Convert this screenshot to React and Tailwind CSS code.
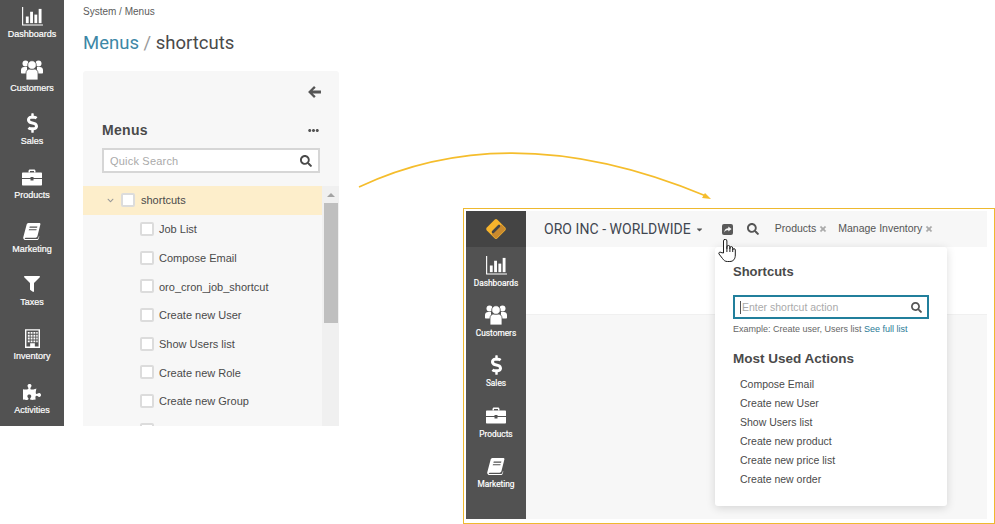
import React from "react";
import {
  FaDollarSign,
  FaFilter,
  FaPuzzlePiece,
  FaSearch,
  FaTimes,
  FaEllipsisH,
  FaChevronDown,
  FaCaretDown,
} from "react-icons/fa";

const ChartIcon = ({ className }) => (
  <svg viewBox="0 0 22 20" className={className} fill="currentColor">
    <path d="M0 0h1.200v18.300H22v1.200H0z" />
    <rect x="4" y="10" width="3" height="7" />
    <rect x="8.500" y="5" width="3" height="12" />
    <rect x="13" y="8" width="3" height="9" />
    <rect x="17.500" y="2" width="3" height="15" />
  </svg>
);

const UsersIcon = ({ className }) => (
  <svg viewBox="0 0 22 20" className={className} fill="currentColor">
    <circle cx="4.500" cy="3.500" r="3" />
    <circle cx="17.500" cy="3.500" r="3" />
    <path d="M0 12.500V10c0-2 1.500-3 3-3h3v6.500H1c-.6 0-1-.4-1-1zM22 12.500V10c0-2-1.500-3-3-3h-3v6.500h5c.6 0 1-.4 1-1z" />
    <path d="M5 20v-7c0-2.500 1.800-4 4-4h4c2.200 0 4 1.500 4 4v7z" stroke="#525252" strokeWidth="0.800" />
    <circle cx="11" cy="5" r="4.300" stroke="#525252" strokeWidth="0.800" />
  </svg>
);

const BriefcaseIcon = ({ className }) => (
  <svg viewBox="0 0 20 16" className={className} fill="currentColor">
    <path fillRule="evenodd" d="M6.500 3V1.500C6.500.7 7.200 0 8 0h4c.8 0 1.500.7 1.500 1.500V3H12V1.500H8V3z" />
    <path d="M1 3h18c.6 0 1 .4 1 1v4.500H11.500V7.500h-3v1H0V4c0-.6.4-1 1-1z" />
    <path d="M0 9.500h8.500v1.500h3V9.500H20V15c0 .6-.4 1-1 1H1c-.6 0-1-.4-1-1z" />
  </svg>
);

const BookIcon = ({ className }) => (
  <svg viewBox="0 0 20 20" className={className} fill="currentColor">
    <path d="M6 1h12c1 0 1.600.8 1.300 1.800l-3.300 13c-.3 1-1 1.600-2 1.600H3c-.8 0-1.200.4-1 1 .2.5.6.6 1.200.6h12c.8 0 1.500-.5 1.800-1.300l.6-2 .6.3-.8 2.600c-.3 1-1.200 1.600-2.200 1.600H3C1.200 20.200 0 18.800.3 17L4 3c.3-1.200 1-2 2-2z" />
    <path fill="#525252" d="M7.500 5h8.500l-.4 1.300H7.100zM6.700 8h8.500l-.4 1.300H6.300z" />
  </svg>
);

const BuildingIcon = ({ className }) => (
  <svg viewBox="0 0 16 20" className={className} fill="currentColor">
    <path fillRule="evenodd" d="M0 0h16v20H0zM1.500 1.500v17h4V15h5v3.500h4v-17z" />
    <path d="M3 3h2v2H3zM6 3h2v2H6zM9 3h2v2H9zM12 3h1.500v2H12zM3 6h2v2H3zM6 6h2v2H6zM9 6h2v2H9zM12 6h1.500v2H12zM3 9h2v2H3zM6 9h2v2H6zM9 9h2v2H9zM12 9h1.500v2H12zM3 12h2v2H3zM6 12h2v2H6zM9 12h2v2H9zM12 12h1.500v2H12z" />
  </svg>
);

const ArrowLeftIcon = ({ className }) => (
  <svg viewBox="0 0 14 13" className={className} fill="currentColor">
    <path d="M6.500 0 8.300 1.800 5 5h9v3H5l3.300 3.200L6.500 13 0 6.500z" />
  </svg>
);

const ShareIcon = ({ className }) => (
  <svg viewBox="0 0 11 11" className={className}>
    <rect width="11" height="11" rx="2" fill="#5a5a5a" />
    <path d="M2.200 8.500c0-2.800 1.800-4.300 4.100-4.300V2.400L9.600 5 6.300 7.600V6c-1.800 0-3 .7-4.100 2.500z" fill="#f7f7f7" />
  </svg>
);

const HandCursor = ({ className }) => (
  <svg viewBox="0 0 18 23" className={className} fill="#fff" stroke="#1f1f1f" strokeWidth="1" strokeLinejoin="round">
    <path d="M5.500 14V2a1.700 1.700 0 0 1 3.400 0v7.500V8a1.500 1.500 0 0 1 3 0v2V9a1.400 1.400 0 0 1 2.800 0v2a1.300 1.300 0 0 1 2.600 0v5c0 4-2 6.500-5.500 6.500H9.500c-2.500 0-3.500-1-5-3L1 15c-.8-1.200.9-2.600 2-1.500z" />
    <path d="M8.900 9v4M11.900 10v3M14.700 11v2" fill="none" />
  </svg>
);

const Logo = () => (
  <svg viewBox="0 0 22 22" className="w-[22px] h-[22px]">
    <rect x="3.500" y="3.500" width="15" height="15" rx="2" fill="#f7b42c" transform="rotate(45 11 11)" />
    <path d="M19.400 9.600a2 2 0 0 1 0 2.800l-7 7a2 2 0 0 1-2.800 0L6.500 16.300l9.800-9.800z" fill="#c98a2e" />
    <path d="M8 14 14 8" stroke="#444444" strokeWidth="2.600" strokeLinecap="round" />
  </svg>
);

const leftNav = [
  { label: "Dashboards", icon: <ChartIcon className="w-[21px] h-[19px]" /> },
  { label: "Customers", icon: <UsersIcon className="w-[22px] h-[20px]" /> },
  { label: "Sales", icon: <FaDollarSign className="w-[11px] h-[20px]" /> },
  { label: "Products", icon: <BriefcaseIcon className="w-[20px] h-[17px]" /> },
  { label: "Marketing", icon: <BookIcon className="w-[18px] h-[18px]" /> },
  { label: "Taxes", icon: <FaFilter className="w-[16px] h-[18px]" /> },
  { label: "Inventory", icon: <BuildingIcon className="w-[15px] h-[19px]" /> },
  { label: "Activities", icon: <FaPuzzlePiece className="w-[18px] h-[18px]" /> },
];

const rightNav = leftNav.slice(0, 5);

const treeItems = [
  "Job List",
  "Compose Email",
  "oro_cron_job_shortcut",
  "Create new User",
  "Show Users list",
  "Create new Role",
  "Create new Group",
  "",
];

const usedActions = [
  "Compose Email",
  "Create new User",
  "Show Users list",
  "Create new product",
  "Create new price list",
  "Create new order",
];

const Checkbox = () => (
  <span className="block w-[14px] h-[14px] shrink-0 bg-white border-2 border-[#dcdcdc] rounded-[2px]" />
);

const App = () => {
  return (
    <div className="relative w-[995px] h-[524px] bg-white overflow-hidden font-['Liberation_Sans',Arial,sans-serif] text-[#4a4a4a]">
      {/* first shot: menu tree */}
      <div className="absolute left-0 top-0 w-[339px] h-[426px] flex">
        <nav className="w-[64px] h-full bg-[#525252] text-white overflow-hidden flex flex-col items-center pt-[6px]">
          {leftNav.map((item) => (
            <div key={item.label} className="h-[53.7px] shrink-0 w-full flex flex-col items-center">
              <div className="h-[20px] flex items-center justify-center">{item.icon}</div>
              <span className="mt-[1px] text-[9px] leading-[14px] [-webkit-text-stroke:0.2px_white]">
                {item.label}
              </span>
            </div>
          ))}
        </nav>

        <div className="flex-1 min-w-0 pl-[19px] flex flex-col">
          <div className="pt-[6px] text-[10px] leading-[12px] text-[#5c5c5c]">System / Menus</div>
          <h1 className="mt-[12px] text-[18.5px] leading-[26px] font-['Roboto',sans-serif] font-normal">
            <span className="text-[#3d87a6]">Menus</span>
            <span className="text-[#9a9a9a]"> / </span>
            <span className="text-[#4a4a4a]">shortcuts</span>
          </h1>

          <section className="mt-[15px] flex-1 min-h-0 bg-[#f7f7f7] rounded-t-[3px] overflow-hidden flex flex-col">
            <div className="flex justify-end pt-[15px] pr-[18px] h-[45px] shrink-0">
              <ArrowLeftIcon className="w-[13px] h-[12px] text-[#555]" />
            </div>
            <div className="pl-[19px] pr-[19px] shrink-0">
              <div className="flex items-center justify-between h-[28px]">
                <span className="text-[14px] font-bold tracking-[0.3px] text-[#4a4a4a]">Menus</span>
                <FaEllipsisH className="w-[11px] h-[11px] text-[#555] mr-[1px]" />
              </div>
              <div className="mt-[4px] h-[25px] bg-white border-2 border-[#d6d6d6] flex items-center justify-between pl-[6px] pr-[6px]">
                <span className="pt-[1px] text-[11px] tracking-[0.2px] text-[#aaaaaa]">Quick Search</span>
                <FaSearch className="w-[12px] h-[12px] text-[#4a4a4a]" />
              </div>
            </div>

            <div className="mt-[13px] flex-1 min-h-0 flex overflow-hidden">
              <ul className="flex-1 min-w-0 text-[11px] text-[#4a4a4a]">
                <li className="h-[28.7px] bg-[#fdeecb] flex items-center pl-[24px] gap-[7px]">
                  <FaChevronDown className="w-[7px] h-[7px] text-[#999]" />
                  <Checkbox />
                  <span className="ml-[-1px]">shortcuts</span>
                </li>
                {treeItems.map((name, i) => (
                  <li key={i} className="h-[28.7px] flex items-center pl-[57px] gap-[5px]">
                    <Checkbox />
                    <span className="pt-[1px]">{name}</span>
                  </li>
                ))}
              </ul>
              <div className="w-[17px] shrink-0 bg-[#f0f0f0] flex flex-col items-center">
                <div className="h-[17px] flex items-center justify-center">
                  <span className="block w-0 h-0 border-x-[4px] border-x-transparent border-b-[4px] border-b-[#a3a3a3]" />
                </div>
                <div className="w-[14px] h-[120px] bg-[#bfbfbf]" />
              </div>
            </div>
          </section>
        </div>
      </div>

      {/* arrow between the shots */}
      <svg className="absolute left-0 top-0 w-[995px] h-[524px] pointer-events-none" viewBox="0 0 995 524" fill="none">
        <path d="M359 187 Q512 115 706 196" stroke="#f5bd2c" strokeWidth="1.600" />
        <path d="M711 199 L702 198 L705 193 Z" fill="#f5bd2c" />
      </svg>

      {/* second shot: shortcuts popup */}
      <div className="absolute left-[463px] top-[208px] w-[532px] h-[316px] border border-[#eeb92f] pl-[2px] pr-[7px] pt-[2px] pb-[4px]">
        <div className="relative w-full h-full flex">
          <nav className="w-[60px] shrink-0 bg-[#525252] text-white flex flex-col">
            <div className="h-[36px] shrink-0 bg-[#444444] flex items-center justify-center">
              <Logo />
            </div>
            <div className="pt-[8px] flex flex-col">
              {rightNav.map((item) => (
                <div key={item.label} className="h-[50.2px] shrink-0 flex flex-col items-center">
                  <div className="h-[20px] flex items-center justify-center">{item.icon}</div>
                  <span className="mt-[2px] text-[8.3px] leading-[13px] font-['Roboto',sans-serif] [-webkit-text-stroke:0.2px_white]">
                    {item.label}
                  </span>
                </div>
              ))}
            </div>
          </nav>

          <div className="flex-1 min-w-0 flex flex-col">
            <header className="h-[36px] shrink-0 bg-[#f7f7f7] flex items-center pl-[18px]">
              <span className="font-['Roboto',sans-serif] text-[14px] tracking-[0.05px] text-[#3f4650]">ORO INC - WORLDWIDE</span>
              <FaCaretDown className="ml-[4px] w-[9px] h-[9px] text-[#555]" />
              <ShareIcon className="ml-[18px] w-[11px] h-[11px]" />
              <FaSearch className="ml-[14px] w-[12px] h-[12px] text-[#555]" />
              <span className="ml-[16px] text-[10.5px] text-[#555]">Products</span>
              <FaTimes className="ml-[3px] w-[8px] h-[8px] text-[#aaaaaa] stroke-[30]" />
              <span className="ml-[11px] text-[10.5px] text-[#555]">Manage Inventory</span>
              <FaTimes className="ml-[3px] w-[8px] h-[8px] text-[#aaaaaa] stroke-[30]" />
            </header>
            <div className="h-[68px] shrink-0 bg-white border-b border-[#f0f0f0]" />
            <div className="flex-1 bg-[#f7f7f7]" />
          </div>

          {/* popup */}
          <div className="absolute left-[249px] top-[36px] w-[232px] h-[259px] bg-white rounded-[3px] shadow-[0_2px_10px_rgba(0,0,0,0.14)] pl-[18px] pr-[18px] pt-[17px]">
            <h3 className="text-[13px] leading-[16px] font-bold text-[#4a4a4a]">Shortcuts</h3>
            <div className="mt-[15px] h-[24px] border-2 border-[#217f9c] flex items-center justify-between pl-[5px] pr-[5px]">
              <span className="text-[10.5px] text-[#aaaaaa] border-l border-[#555] pl-[1px] leading-[13px]">Enter shortcut action</span>
              <FaSearch className="w-[11px] h-[11px] text-[#555]" />
            </div>
            <p className="mt-[5px] text-[9px] leading-[11px] text-[#666]">
              Example: Create user, Users list <span className="text-[#2a7a96]">See full list</span>
            </p>
            <h3 className="mt-[16px] text-[13.5px] leading-[16px] font-bold text-[#4a4a4a]">Most Used Actions</h3>
            <ul className="mt-[8px] pl-[7px] text-[10.5px] text-[#4a4a4a]">
              {usedActions.map((name) => (
                <li key={name} className="h-[19px] flex items-center">{name}</li>
              ))}
            </ul>
          </div>

          <HandCursor className="absolute left-[252px] top-[28px] w-[18px] h-[23px]" />
        </div>
      </div>
    </div>
  );
};

export default App;
